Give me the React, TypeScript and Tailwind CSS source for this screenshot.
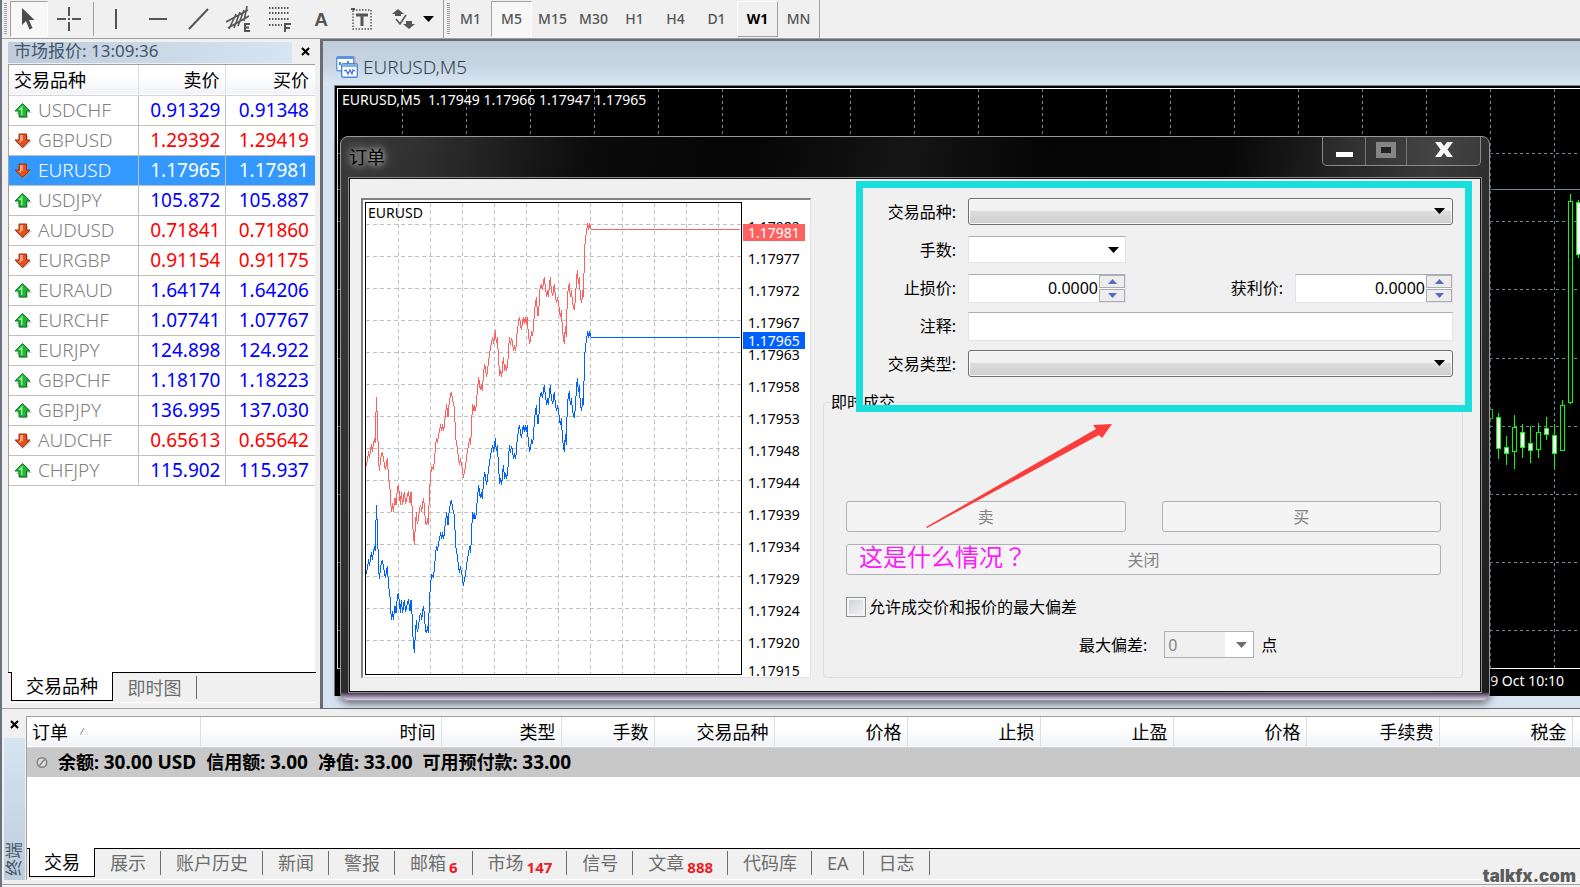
import type { ReactNode } from "react";

const UI = "font-['Noto_Sans','Noto_Sans_CJK_SC',sans-serif]";

const quotes = [
  { symbol: "USDCHF", bid: "0.91329", ask: "0.91348", up: true },
  { symbol: "GBPUSD", bid: "1.29392", ask: "1.29419", up: false },
  { symbol: "EURUSD", bid: "1.17965", ask: "1.17981", up: false, selected: true },
  { symbol: "USDJPY", bid: "105.872", ask: "105.887", up: true },
  { symbol: "AUDUSD", bid: "0.71841", ask: "0.71860", up: false },
  { symbol: "EURGBP", bid: "0.91154", ask: "0.91175", up: false },
  { symbol: "EURAUD", bid: "1.64174", ask: "1.64206", up: true },
  { symbol: "EURCHF", bid: "1.07741", ask: "1.07767", up: true },
  { symbol: "EURJPY", bid: "124.898", ask: "124.922", up: true },
  { symbol: "GBPCHF", bid: "1.18170", ask: "1.18223", up: true },
  { symbol: "GBPJPY", bid: "136.995", ask: "137.030", up: true },
  { symbol: "AUDCHF", bid: "0.65613", ask: "0.65642", up: false },
  { symbol: "CHFJPY", bid: "115.902", ask: "115.937", up: true },
];

const periods = ["M1", "M5", "M15", "M30", "H1", "H4", "D1", "W1", "MN"];

const terminalColumns = [
  { title: "时间", width: "w-[241px]" },
  { title: "类型", width: "w-[120px]" },
  { title: "手数", width: "w-[93px]" },
  { title: "交易品种", width: "w-[120px]" },
  { title: "价格", width: "w-[133px]" },
  { title: "止损", width: "w-[133px]" },
  { title: "止盈", width: "w-[133px]" },
  { title: "价格", width: "w-[133px]" },
  { title: "手续费", width: "w-[133px]" },
  { title: "税金", width: "w-[133px]" },
];

const account = [
  { title: "余额:", value: "30.00 USD" },
  { title: "信用额:", value: "3.00" },
  { title: "净值:", value: "33.00" },
  { title: "可用预付款:", value: "33.00" },
];

const terminalTabs: { title: string; count?: string }[] = [
  { title: "展示" },
  { title: "账户历史" },
  { title: "新闻" },
  { title: "警报" },
  { title: "邮箱", count: "6" },
  { title: "市场", count: "147" },
  { title: "信号" },
  { title: "文章", count: "888" },
  { title: "代码库" },
  { title: "EA" },
  { title: "日志" },
];

const priceScale = [
  "1.17982", "1.17977", "1.17972", "1.17967", "1.17963", "1.17958", "1.17953", "1.17948",
  "1.17944", "1.17939", "1.17934", "1.17929", "1.17924", "1.17920",
];

// ask line of the tick chart, three units per pixel; the bid line is the same one lower down
const ticks =
  "79,858 82,841 86,814 88,836 94,794 97,816 103,776 106,791 109,651 113,736 115,826 118,874 122,836 127,816 131,841 136,871 142,836 " +
  "146,896 150,926 154,996 157,971 160,996 165,954 168,976 172,926 175,916 178,941 181,976 184,936 188,976 193,936 197,974 200,956 " +
  "205,934 208,956 210,971 213,936 216,976 219,1046 223,1096 226,1036 229,998 232,1034 236,1011 239,986 242,976 245,996 250,956 " +
  "253,976 256,1026 260,1036 262,1016 265,1036 268,946 271,896 275,858 280,871 284,836 286,806 289,776 292,791 296,766 302,734 " +
  "305,754 308,734 311,754 316,706 320,674 324,711 328,666 334,636 338,661 344,686 346,766 352,806 358,856 361,836 367,866 370,894 " +
  "376,861 382,816 389,775 392,795 395,725 398,672 402,695 404,675 407,695 412,635 416,592 421,632 424,612 427,635 431,575 434,553 " +
  "440,592 446,540 452,500 458,472 461,492 466,450 469,490 472,472 476,540 479,590 482,570 485,592 490,532 494,575 497,555 500,575 " +
  "505,530 508,472 511,495 515,475 521,515 524,495 527,515 532,450 538,412 544,450 550,412 553,432 556,412 559,432 562,412 565,465 " +
  "569,492 575,455 578,470 584,390 589,352 593,410 596,405 599,330 604,312 607,330 613,292 617,330 620,352 622,332 625,352 631,292 " +
  "634,330 638,350 643,312 646,350 650,370 653,352 657,380 661,412 664,392 668,460 673,492 676,440 679,472 682,345 688,310 691,352 " +
  "694,332 698,370 703,390 707,350 709,300 712,272 715,312 718,292 721,350 725,370 728,332 731,352 733,210 740,150 743,130 746,150 " +
  "749,130 752,148 1201,148";

// x, high, body top, body bottom, low, filled
const candles: [number, number, number, number, number, boolean][] = [
  [1490, 409, 409, 419, 419, false],
  [1498, 413, 417, 449, 459, true],
  [1506, 436, 447, 454, 465, true],
  [1514, 415, 427, 452, 469, false],
  [1522, 424, 432, 448, 458, true],
  [1530, 426, 443, 451, 463, true],
  [1538, 423, 432, 450, 458, false],
  [1546, 417, 428, 435, 440, true],
  [1554, 424, 435, 454, 469, true],
  [1562, 400, 405, 451, 451, false],
  [1570, 194, 201, 403, 404, false],
  [1578, 200, 202, 255, 258, true],
];

function Caret({ className = "text-black" }: { className?: string }) {
  return (
    <svg width="11" height="6" viewBox="0 0 11 6" className={className}>
      <path d="M0 0h11L5.5 6z" fill="currentColor" />
    </svg>
  );
}

function CloseMark() {
  return (
    <svg width="9" height="9" viewBox="0 0 9 9">
      <path d="M1 1l7 7M8 1L1 8" stroke="#000" strokeWidth="2.2" />
    </svg>
  );
}

function TrendArrow({ up }: { up: boolean }) {
  return up ? (
    <svg width="18" height="17" viewBox="0 0 18 17">
      <path d="M9 3l9 8h-4v5H6v-4H2z" fill="#999" opacity=".5" />
      <path d="M8.500 1.500l7.500 7.500h-3.500v6H5V9H1z" fill="#22b33a" stroke="#0b7a1c" />
      <path d="M8.500 3.500L4 8h3v5h1.500z" fill="#8df08f" />
    </svg>
  ) : (
    <svg width="18" height="17" viewBox="0 0 18 17">
      <path d="M9 17l9-8h-4V4H6v5H2z" fill="#999" opacity=".5" />
      <path d="M8.500 15.500L16 8h-3.500V2H5v6H1z" fill="#e4501e" stroke="#99300b" />
      <path d="M6 3h3v6H7v2L4 9h2z" fill="#ffa27a" />
    </svg>
  );
}

function ToolButton({ label, className, children }: { label: string; className: string; children: ReactNode }) {
  return (
    <button aria-label={label} className={`flex h-9 items-center justify-center ${className}`}>
      {children}
    </button>
  );
}

function Grip() {
  return <div className="my-[3px] w-[3px] self-stretch bg-[repeating-linear-gradient(#a0a0a0_0_1px,#f0f0f0_1px_2px)]" />;
}

function Toolbar() {
  return (
    <div className="flex h-[38px] shrink-0 items-center text-[#555]">
      <div className="w-[2px]" />
      <Grip />
      <ToolButton label="光标" className="ml-[3px] w-[38px] border border-white border-t-[#a0a0a0] border-l-[#a0a0a0] bg-[#f7f7f7]">
        <svg width="14" height="24" viewBox="0 0 14 24">
          <path d="M0 1v17l4-4 3.500 8.500 3-1.500L7 13h5.500z" fill="#4c4c4c" />
        </svg>
      </ToolButton>
      <ToolButton label="十字准线" className="w-[42px]">
        <svg width="24" height="24" viewBox="0 0 24 24" stroke="#555" strokeWidth="2">
          <path d="M12 0v9M12 15v9M0 12h9M15 12h9" />
          <path d="M11 12h2" />
        </svg>
      </ToolButton>
      <div className="mx-[3px] h-[34px] w-px bg-[#a0a0a0]" />
      <ToolButton label="垂直线" className="w-[40px]">
        <svg width="20" height="22" viewBox="0 0 20 22"><path d="M9 1v20" stroke="#555" strokeWidth="2" /></svg>
      </ToolButton>
      <ToolButton label="水平线" className="w-[42px]">
        <svg width="20" height="20" viewBox="0 0 20 20"><path d="M1 10h18" stroke="#555" strokeWidth="2" /></svg>
      </ToolButton>
      <ToolButton label="趋势线" className="w-[40px]">
        <svg width="22" height="22" viewBox="0 0 22 22"><path d="M1 21L20 1" stroke="#555" strokeWidth="2" /></svg>
      </ToolButton>
      <ToolButton label="等距通道" className="w-[40px]">
        <svg width="26" height="28" viewBox="0 0 26 28" fill="none" stroke="#555" strokeWidth="1.600">
          <path d="M0 17L22 5M2 23L23 11M3 24L10 9M8 23L14 7M12 21L18 5M18 16L21 1" />
          <path d="M24 19h-5v7h5M19 22.500h4" strokeWidth="2" />
        </svg>
      </ToolButton>
      <ToolButton label="斐波纳契回调线" className="w-[42px]">
        <svg width="24" height="28" viewBox="0 0 24 28" fill="none" stroke="#555">
          <path d="M1 3h21M1 8h21M1 14h21M1 20h13" strokeWidth="2" strokeDasharray="1.500 1.500" />
          <path d="M17 27v-8h6M17 23h5" strokeWidth="2" />
        </svg>
      </ToolButton>
      <ToolButton label="文字" className="w-[40px]">
        <span className="font-['Liberation_Sans',sans-serif] text-[19px] leading-none font-bold">A</span>
      </ToolButton>
      <ToolButton label="文字标签" className="w-[42px]">
        <svg width="22" height="24" viewBox="0 0 22 24" fill="none" stroke="#555">
          <rect x="2" y="3" width="18" height="19" strokeWidth="1.500" strokeDasharray="1.500 1.500" />
          <path d="M5 8h12M11 8v11" strokeWidth="3" />
          <path d="M0 2h4" strokeWidth="2" />
        </svg>
      </ToolButton>
      <ToolButton label="箭头" className="w-[60px] gap-2">
        <svg width="23" height="22" viewBox="0 0 23 22" fill="#555">
          <path d="M6 1l6 5H9v2H3V6H0zM17 21l-6-5h3v-3h6v3h3z" />
          <path d="M4 11l4 5 6-9" fill="none" stroke="#555" strokeWidth="1.600" />
        </svg>
        <Caret />
      </ToolButton>
      <div className="mr-[3px] h-full w-px bg-[#a0a0a0]" />
      <Grip />
      <div className="flex font-['Noto_Sans',sans-serif] text-sm font-medium">
        {periods.map((p) => (
          <button
            key={p}
            className={`h-9 w-[41px] border ${
              p === "M5"
                ? "border-white border-t-[#a0a0a0] border-l-[#a0a0a0] bg-[#f7f7f7]"
                : p === "W1"
                  ? "border-[#a0a0a0] border-t-white border-l-white font-bold text-black"
                  : "border-transparent"
            }`}
          >
            {p}
          </button>
        ))}
      </div>
      <div className="h-full w-px bg-[#a0a0a0]" />
    </div>
  );
}

function MarketWatch() {
  return (
    <aside className="flex w-[318px] shrink-0 flex-col border-b border-[#a0a0a0] pt-[3px] pr-1 pl-[6px]">
      <div className="flex h-[22px] items-start">
        <div className="h-[21px] w-[284px] bg-linear-to-r from-[#bdccdb] to-[#d7e4f2] pl-[6px] text-[17px] leading-[18px] text-[#45566a]">
          市场报价: 13:09:36
        </div>
        <button aria-label="关闭市场报价" className="ml-[9px] flex h-[19px] items-center">
          <CloseMark />
        </button>
      </div>
      <div className="flex min-h-0 w-[307px] flex-1 flex-col border-t border-l border-[#a0a0a0] bg-white">
        <table className="w-full table-fixed border-collapse">
          <thead>
            <tr className="h-[30px] border-b border-[#d5d5d5] bg-linear-to-b from-white from-35% to-[#f1f3f6] text-lg leading-6">
              <th className="w-[129px] pl-[5px] text-left font-normal">交易品种</th>
              <th className="w-[87px] border-l border-[#dedfe1] pr-[5px] text-right font-normal">卖价</th>
              <th className="border-l border-[#dedfe1] pr-[6px] text-right font-normal">买价</th>
            </tr>
          </thead>
          <tbody>
            {quotes.map((q) => (
              <tr
                key={q.symbol}
                className={`h-[30px] border-b border-[#c0c0c0] text-[19px] leading-6 ${
                  q.selected ? "bg-[#3399ff] text-white" : q.up ? "text-[#0000ff]" : "text-[#ff0000]"
                }`}
              >
                <td className="p-0">
                  <div className="flex items-center gap-[6px] pl-[5px]">
                    <TrendArrow up={q.up} />
                    <span className={q.selected ? "font-light" : "font-light text-[#808080]"}>{q.symbol}</span>
                  </div>
                </td>
                <td className="border-l border-[#c0c0c0] py-0 pr-[4px] text-right">{q.bid}</td>
                <td className="border-l border-[#c0c0c0] py-0 pr-[6px] text-right">{q.ask}</td>
              </tr>
            ))}
          </tbody>
        </table>
      </div>
      <div className="mb-[5px] flex h-[31px] border-b border-white bg-[#f0f0f0] text-lg">
        <div className="w-[3px] border-t border-black" />
        <button className="h-[29px] w-[102px] border border-t-0 border-black bg-white leading-7">交易品种</button>
        <div className="flex flex-1 items-start border-t border-black">
          <button className="mt-[3px] h-[23px] w-[84px] border-r border-[#6d6d6d] leading-6 text-[#6d6d6d]">即时图</button>
        </div>
      </div>
    </aside>
  );
}

function PriceChart() {
  return (
    <svg className="absolute inset-0 h-full w-full" shapeRendering="crispEdges">
      <g stroke="#778899" strokeDasharray="3 3">
        {Array.from({ length: 19 }, (_, i) => (
          <line key={i} x1={64.5 + 64 * i} x2={64.5 + 64 * i} y1="0" y2="100%" />
        ))}
        {Array.from({ length: 8 }, (_, i) => (
          <line key={i} x1="0" x2="100%" y1={64.5 + Math.round(68.2 * i)} y2={64.5 + Math.round(68.2 * i)} />
        ))}
      </g>
      <line x1="0" x2="100%" y1="100.500" y2="100.500" stroke="#778899" />
      <g transform="translate(-338 -89)" stroke="#00ff00">
        {candles.map(([x, high, top, bottom, low, filled]) => (
          <g key={x}>
            <line x1={x + 0.5} x2={x + 0.5} y1={high} y2={low} />
            <rect x={x - 1.5} y={top + 0.5} width="4" height={bottom - top - 1} fill={filled ? "#fff" : "#000"} />
          </g>
        ))}
      </g>
    </svg>
  );
}

function TickChart() {
  return (
    <div className="flex h-[480px] w-[450px] shrink-0 overflow-hidden border-t-2 border-l-2 border-[#808080] border-r border-b border-r-[#e3e3e3] border-b-[#e3e3e3] bg-white pt-[2px] pl-[2px] font-['Noto_Sans',sans-serif] text-sm">
      <div className="relative h-[473px] w-[377px] border border-black">
        <svg width="375" height="471" viewBox="0 0 375 471" shapeRendering="crispEdges">
          <g stroke="#c0c0c0" strokeDasharray="4 3">
            {Array.from({ length: 11 }, (_, i) => (
              <line key={i} x1={32.5 + 32 * i} x2={32.5 + 32 * i} y1="0" y2="471" />
            ))}
            {Array.from({ length: 14 }, (_, i) => (
              <line key={i} x1="0" x2="375" y1={21.5 + 32 * i} y2={21.5 + 32 * i} />
            ))}
          </g>
          <g transform="scale(.33333) translate(-78 -69.5)" fill="none" strokeWidth="3">
            <polyline points={ticks} stroke="#ff6060" />
            <polyline points={ticks} stroke="#0060ff" transform="translate(0 324)" />
          </g>
        </svg>
        <span className="absolute top-0 left-[2px]">EURUSD</span>
      </div>
      <div className="relative flex w-[66px] flex-col pt-[9px] pl-[6px]">
        {priceScale.map((p) => (
          <div key={p} className="h-8 shrink-0 leading-8">{p}</div>
        ))}
        <div className="h-8 shrink-0 leading-6">1.17915</div>
        <div className="absolute top-[22px] left-px w-[62px] bg-[#ff6060] pl-[5px] leading-[17px] text-white">1.17981</div>
        <div className="absolute top-[130px] left-px w-[62px] bg-[#0060ff] pl-[5px] leading-[17px] text-white">1.17965</div>
      </div>
    </div>
  );
}

function WideSelect({ id }: { id: string }) {
  return (
    <div className="relative flex-1">
      <select
        id={id}
        className="block h-[27px] w-full appearance-none rounded-[3px] border border-[#707070] bg-linear-to-b from-[#f2f2f2] from-45% via-[#dddddd] via-50% to-[#cfcfcf] shadow-[inset_0_0_0_1px_#fafafa]"
      />
      <span className="pointer-events-none absolute top-[10px] right-2"><Caret /></span>
    </div>
  );
}

function PriceInput({ id }: { id: string }) {
  return (
    <div className="flex h-[29px] w-[158px] border border-[#e2e3ea] border-t-[#abadb3] bg-white">
      <input id={id} defaultValue="0.0000" className="h-[25px] w-[130px] min-w-0 bg-transparent pr-px text-right text-base outline-none" />
      <div className="flex flex-1 flex-col gap-px">
        <button aria-label="增加" className="flex h-[13px] items-center justify-center border border-[#abadb3] bg-[#ededed] text-[#5469c4]">
          <svg width="9" height="5" viewBox="0 0 9 5"><path d="M0 5h9L4.500 0z" fill="currentColor" /></svg>
        </button>
        <button aria-label="减少" className="flex h-[13px] items-center justify-center border border-[#abadb3] bg-[#ededed] text-[#5469c4]">
          <svg width="9" height="5" viewBox="0 0 9 5"><path d="M0 0h9L4.500 5z" fill="currentColor" /></svg>
        </button>
      </div>
    </div>
  );
}

function FormRow({ label, htmlFor, children }: { label: string; htmlFor: string; children: ReactNode }) {
  return (
    <div className="flex h-[38px] items-start gap-3">
      <label htmlFor={htmlFor} className="w-[133px] text-right leading-7">{label}</label>
      {children}
    </div>
  );
}

function OrderDialog() {
  const disabledButton = "h-[31px] rounded-[3px] border border-[#adb2b5] bg-[#f4f4f4] text-[#838383]";
  return (
    <div className="absolute top-[95px] right-[90px] left-[17px] rounded-lg border border-[#9a9a9a] bg-[linear-gradient(to_bottom,transparent_555px,#5d5468_557px,#cdc3de_562px),linear-gradient(100deg,#3a3a3a_0,#303030_80px,#0b0b0b_250px,#050505_400px,#151515_560px,#050505_700px,#080808_880px,#3a3a3a_1080px,#1c1c1c)] px-[8px] pb-[8px] shadow-[0_2px_8px_rgba(0,0,0,0.6)]">
      <div className="flex h-[41px] items-start justify-between">
        <h2 className="mt-[8px] text-lg leading-6 text-black [text-shadow:0_0_8px_#bbb,0_0_12px_#999,0_0_4px_#999]">订单</h2>
        <div className="flex h-[29px] overflow-hidden rounded-b-[5px] border border-t-0 border-[#8a8a8a] bg-white/5">
          <button aria-label="最小化" className="flex w-[43px] justify-center border-r border-[#777] pt-[15px]">
            <span className="h-[5px] w-[17px] bg-white" />
          </button>
          <button aria-label="最大化" className="flex w-[41px] justify-center border-r border-[#777] pt-[5px]">
            <span className="h-4 w-5 border-[5px] border-[#858585] bg-[#222]" />
          </button>
          <button aria-label="关闭窗口" className="flex w-[73px] justify-center pt-[5px]">
            <svg width="18" height="16" viewBox="0 0 18 16"><path d="M0 0h6l3 4 3-4h6l-5.500 7.500L18 15h-6l-3-4-3 4H0l5.500-7.500z" fill="#f4f4f6" /></svg>
          </button>
        </div>
      </div>

      <div className="flex gap-3 border border-[#111] bg-[#f0f0f0] pt-[19px] pr-[17px] pb-[13px] pl-[11px] outline outline-[#8a8a8a]">
        <TickChart />
        <div className="flex flex-1 flex-col text-base">
          <form className="pr-[10px]">
            <FormRow label="交易品种:" htmlFor="symbol"><WideSelect id="symbol" /></FormRow>
            <FormRow label="手数:" htmlFor="volume">
              <div className="relative">
                <select id="volume" className="block h-[27px] w-[158px] appearance-none border border-[#e2e3ea] border-t-[#abadb3] bg-white" />
                <span className="pointer-events-none absolute top-[11px] right-[7px]"><Caret /></span>
              </div>
            </FormRow>
            <FormRow label="止损价:" htmlFor="stop-loss">
              <PriceInput id="stop-loss" />
              <div className="ml-auto flex gap-3">
                <label htmlFor="take-profit" className="leading-7">获利价:</label>
                <PriceInput id="take-profit" />
              </div>
            </FormRow>
            <FormRow label="注释:" htmlFor="comment">
              <input id="comment" className="h-[29px] flex-1 border border-[#e2e3ea] border-t-[#abadb3] bg-white" />
            </FormRow>
            <FormRow label="交易类型:" htmlFor="type"><WideSelect id="type" /></FormRow>
          </form>

          <fieldset className="mt-1 flex-1 rounded-[4px] border border-[#d5dfe5] pr-[21px] pl-[22px]">
            <legend className="-ml-4 px-px leading-5">即时成交</legend>
            <div className="grid grid-cols-2 gap-x-9 gap-y-3 pt-[89px]">
              <button disabled className={disabledButton}>卖</button>
              <button disabled className={disabledButton}>买</button>
              <button disabled className={`col-span-2 ${disabledButton}`}>关闭</button>
            </div>
            <label className="mt-5 flex items-center gap-[3px]">
              <input
                type="checkbox"
                className="h-5 w-5 appearance-none border border-[#8e8f8f] bg-linear-to-br from-[#cbcfd5] to-[#f6f6f6] shadow-[inset_0_0_0_2px_#f4f4f4]"
              />
              允许成交价和报价的最大偏差
            </label>
            <div className="mt-3 ml-[233px] flex items-center">
              <label htmlFor="deviation">最大偏差:</label>
              <div className="relative mr-[7px] ml-[17px]">
                <select
                  id="deviation"
                  disabled
                  className="block h-[27px] w-[90px] appearance-none border border-[#adb2b5] bg-linear-to-r from-[#f0f0f0] from-[60px] to-white to-[60px] pl-[3px] text-[#838383] opacity-100"
                >
                  <option>0</option>
                </select>
                <span className="pointer-events-none absolute top-[11px] right-[7px]"><Caret className="text-[#6d6d6d]" /></span>
              </div>
              点
            </div>
          </fieldset>
        </div>
      </div>

      {/* marks drawn by hand over the order form */}
      <div className="pointer-events-none absolute top-[44px] right-[17px] h-[231px] w-[616px] border-7 border-[#18dedd]" />
      <svg className="pointer-events-none absolute top-[286px] right-[376px]" width="188" height="106" viewBox="0 0 188 106">
        <path d="M1 104L171 6l-3-4 19-1-10 14-3-3L2 105z" fill="#fc3b3b" />
      </svg>
      <p className="pointer-events-none absolute top-[403px] right-[462px] text-2xl text-[#f81ef8]">
        这是什么情况<span className="font-['Noto_Sans_CJK_TC',sans-serif]">？</span>
      </p>
    </div>
  );
}

function ChartWindow() {
  return (
    <main className="relative flex min-w-0 flex-1 flex-col border-t-2 border-b border-l-3 border-[#6b6b70] bg-[#d6e4f1]">
      <div className="flex h-11 shrink-0 items-center gap-[5px] bg-linear-to-b from-[#c0cedb] via-[#c8d6e4] via-60% to-[#d9e6f4] pt-2 pl-[13px]">
        <svg width="22" height="22" viewBox="0 0 22 22" fill="#fff">
          <rect x=".7" y=".7" width="17" height="14" rx="1.500" stroke="#5b94e0" strokeWidth="1.400" />
          <path d="M1 1h17v2H1z" fill="#5b94e0" />
          <path d="M18 1h1v6" stroke="#ef8484" fill="none" />
          <path d="M3 9V6h2v3h2V7h2v2h2V5h2v4z" fill="#4a82dc" />
          <rect x="5.700" y="7.700" width="15.600" height="13.600" rx="1.500" stroke="#4d87d8" strokeWidth="1.400" />
          <path d="M6 8h15v3H6z" fill="#7eb0ec" />
          <path d="M8 15l2-1 2 4 2-4 2 4 1-4 2 1" stroke="#4a6fdc" fill="none" strokeWidth="1.300" />
        </svg>
        <span className="text-[19px] leading-6 font-light text-[#33414f]">EURUSD,M5</span>
      </div>
      <div className="mb-[12px] ml-[11px] flex flex-1 flex-col border-t border-l border-[#808080] bg-black pt-[2px] pl-[2px] font-['Noto_Sans',sans-serif] text-sm text-white">
        <div className="relative flex-1 overflow-hidden border-t border-b border-l border-white">
          <PriceChart />
          <div className="relative pt-px pl-[4px] whitespace-pre">EURUSD,M5  1.17949 1.17966 1.17947 1.17965</div>
        </div>
        <div className="h-[27px] pr-4 text-right leading-6">9 Oct 10:10</div>
      </div>
      <OrderDialog />
    </main>
  );
}

function Terminal() {
  return (
    <section className="relative flex shrink-0 border-b border-[#a0a0a0] pt-[7px] pb-[4px]">
      <div className="flex w-[24px] shrink-0 flex-col items-center">
        <button aria-label="关闭终端" className="flex h-[22px] items-start pt-1">
          <CloseMark />
        </button>
        <div className="flex w-[21px] flex-1 items-end justify-center bg-linear-to-b from-[#d7e4f2] to-[#bdccdb] pb-1">
          <span className="rotate-180 text-[17px] leading-5 text-[#45566a] [text-orientation:sideways] [writing-mode:vertical-rl]">终端</span>
        </div>
      </div>
      <div className="min-w-0 flex-1 border-t border-l border-[#a0a0a0] bg-white">
        <table className="w-full table-fixed border-collapse text-lg leading-6">
          <thead>
            <tr className="h-[30px] border-b border-[#d5d5d5] bg-linear-to-b from-white from-35% to-[#f1f3f6]">
              <th className="w-[173px] pl-[5px] text-left font-normal">
                <span className="flex items-center gap-3">
                  订单
                  <svg width="8" height="7" viewBox="0 0 8 7"><path d="M0 7L4 0" stroke="#888" /><path d="M4 0l4 7H0" stroke="#e4e4e4" fill="none" /></svg>
                </span>
              </th>
              {terminalColumns.map((c, i) => (
                <th key={i} className={`border-l border-[#dedfe1] pr-[5px] text-right font-normal ${c.width}`}>{c.title}</th>
              ))}
              <th className="border-l border-[#dedfe1]" />
            </tr>
          </thead>
          <tbody>
            <tr className="h-[30px] bg-[#c8c8c8]">
              <td colSpan={12} className="p-0">
                <div className="flex items-center gap-[10px] pl-[9px] leading-[26px] font-bold">
                  <svg width="12" height="13" viewBox="0 0 12 13" fill="#ddd" stroke="#808080" strokeWidth="1.600">
                    <circle cx="6" cy="6.500" r="4.700" />
                    <path d="M3.500 9.500l5-6" />
                  </svg>
                  {account.map((a) => (
                    <span key={a.title}>
                      {a.title} <span className="text-[19px]">{a.value}</span>
                    </span>
                  ))}
                </div>
              </td>
            </tr>
          </tbody>
        </table>
        <div className="h-[71px]" />
        <div className="flex h-[32px] border-b border-white bg-[#f0f0f0] text-lg text-[#6d6d6d]">
          <div className="w-[2px] border-t border-black" />
          <button className="h-[29px] w-[66px] border border-t-0 border-black bg-white leading-7 text-black">交易</button>
          <div className="flex flex-1 items-start border-t border-black">
            {terminalTabs.map((t) => (
              <button key={t.title} className="mt-[2px] flex h-[24px] items-center border-r border-[#6d6d6d] pr-[14px] pb-px pl-[15px]">
                {t.title}
                {t.count && <span className="ml-[3px] pt-[9px] text-[15px] leading-none font-bold text-[#ed1c24]">{t.count}</span>}
              </button>
            ))}
          </div>
        </div>
      </div>
      <span className="absolute right-1 bottom-0 font-['Inter',sans-serif] text-[17px] leading-4 font-black text-[#5c5c5c] [text-shadow:1px_1px_0_#fff]">talkfx.com</span>
    </section>
  );
}

export default function App() {
  return (
    <div className={`flex h-screen min-h-[887px] flex-col overflow-hidden border-l-2 border-[#6a7280] bg-[#f0f0f0] pb-[2px] text-black ${UI}`}>
      <Toolbar />
      <div className="flex min-h-0 flex-1 border-t border-[#a0a0a0]">
        <MarketWatch />
        <ChartWindow />
      </div>
      <Terminal />
    </div>
  );
}
